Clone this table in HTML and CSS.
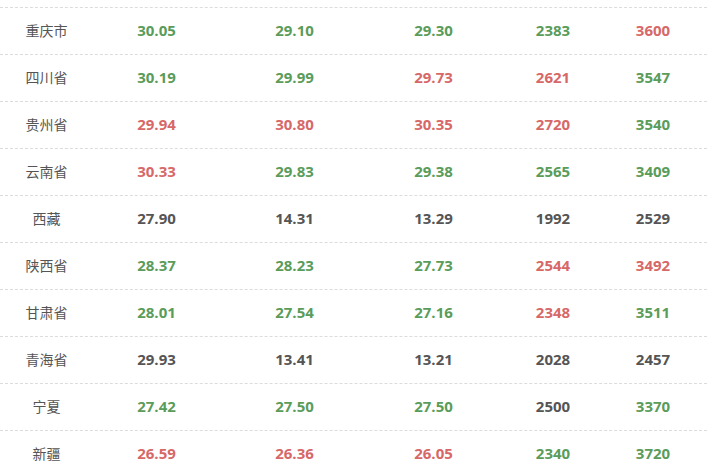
FILE: index.html
```html
<!DOCTYPE html>
<html lang="zh">
<head>
<meta charset="utf-8">
<link rel="stylesheet" href="styles.css">
</head>
<body>
<div class="table">
  <div class="row"><span class="name">重庆市</span><span class="g">30.05</span><span class="g">29.10</span><span class="g">29.30</span><span class="g">2383</span><span class="r">3600</span></div>
  <div class="row"><span class="name">四川省</span><span class="g">30.19</span><span class="g">29.99</span><span class="r">29.73</span><span class="r">2621</span><span class="g">3547</span></div>
  <div class="row"><span class="name">贵州省</span><span class="r">29.94</span><span class="r">30.80</span><span class="r">30.35</span><span class="r">2720</span><span class="g">3540</span></div>
  <div class="row"><span class="name">云南省</span><span class="r">30.33</span><span class="g">29.83</span><span class="g">29.38</span><span class="g">2565</span><span class="g">3409</span></div>
  <div class="row"><span class="name">西藏</span><span class="d">27.90</span><span class="d">14.31</span><span class="d">13.29</span><span class="d">1992</span><span class="d">2529</span></div>
  <div class="row"><span class="name">陕西省</span><span class="g">28.37</span><span class="g">28.23</span><span class="g">27.73</span><span class="r">2544</span><span class="r">3492</span></div>
  <div class="row"><span class="name">甘肃省</span><span class="g">28.01</span><span class="g">27.54</span><span class="g">27.16</span><span class="r">2348</span><span class="g">3511</span></div>
  <div class="row"><span class="name">青海省</span><span class="d">29.93</span><span class="d">13.41</span><span class="d">13.21</span><span class="d">2028</span><span class="d">2457</span></div>
  <div class="row"><span class="name">宁夏</span><span class="g">27.42</span><span class="g">27.50</span><span class="g">27.50</span><span class="d">2500</span><span class="g">3370</span></div>
  <div class="row"><span class="name">新疆</span><span class="r">26.59</span><span class="r">26.36</span><span class="r">26.05</span><span class="g">2340</span><span class="g">3720</span></div>
</div>
</body>
</html>
```

FILE: styles.css
```css
html, body {
  margin: 0;
  padding: 0;
  background: #ffffff;
  overflow: hidden;
}
.table {
  padding-top: 7px;
  width: 707px;
}
.row {
  display: grid;
  grid-template-columns: 93px 127px 149px 129px 110px 90px 9px;
  height: 46px;
  align-items: center;
  border-top: 1px dashed #dcdcdc;
  font-family: "Open Sans", "Noto Sans CJK SC", sans-serif;
  font-size: 15px;
}
.row span {
  text-align: center;
  font-weight: 700;
  line-height: 20px;
  padding-bottom: 2px;
}
.row .name {
  font-family: "Noto Sans CJK SC", sans-serif;
  font-size: 14px;
  font-weight: 400;
  color: #555555;
}
.g { color: #5a9c5a; }
.r { color: #d76868; }
.d { color: #555555; }
```
